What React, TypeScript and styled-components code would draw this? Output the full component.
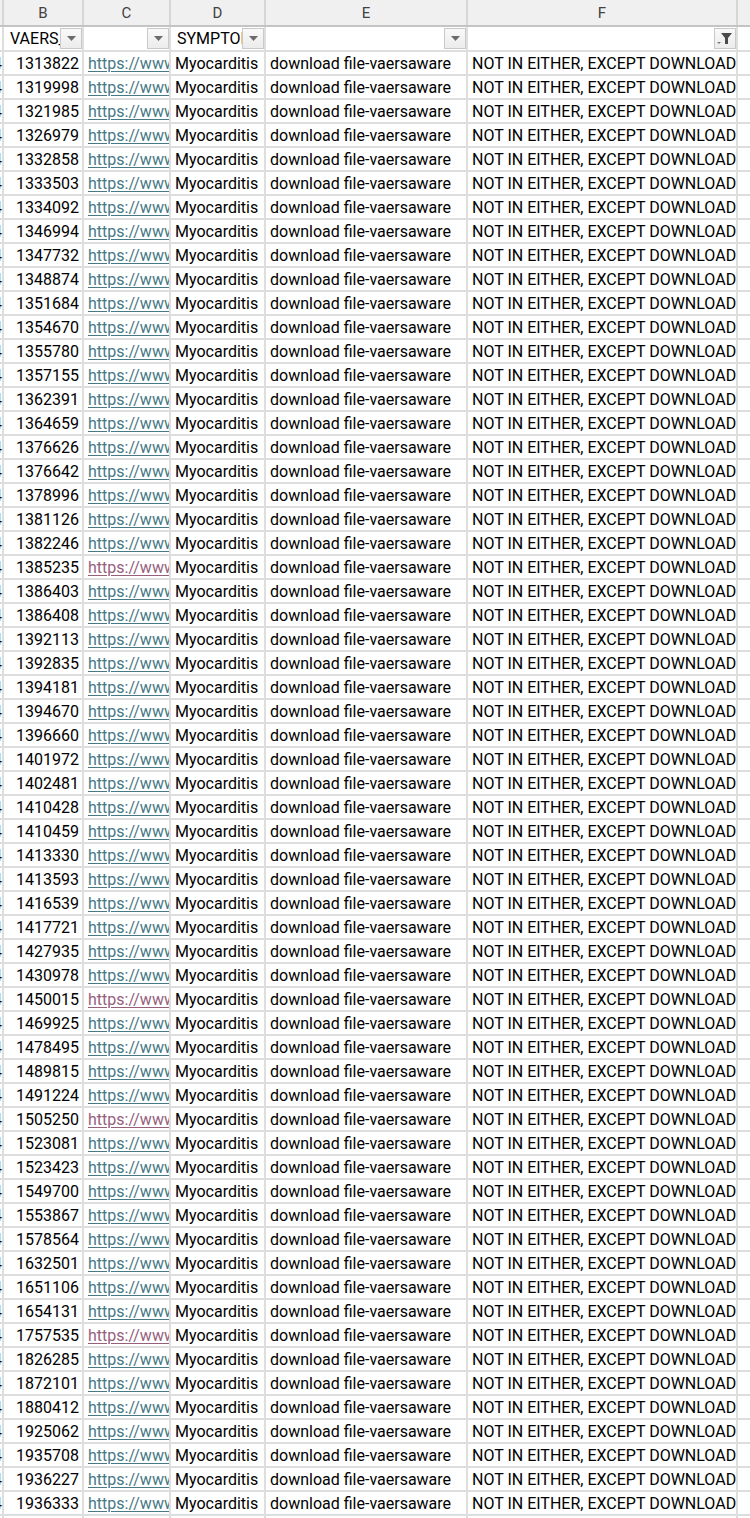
import React from "react";
import styled, {createGlobalStyle} from "styled-components";

const ids = [
    "1313822", "1319998", "1321985", "1326979", "1332858", "1333503", "1334092", "1346994", "1347732", "1348874",
    "1351684", "1354670", "1355780", "1357155", "1362391", "1364659", "1376626", "1376642", "1378996", "1381126",
    "1382246", "1385235", "1386403", "1386408", "1392113", "1392835", "1394181", "1394670", "1396660", "1401972",
    "1402481", "1410428", "1410459", "1413330", "1413593", "1416539", "1417721", "1427935", "1430978", "1450015",
    "1469925", "1478495", "1489815", "1491224", "1505250", "1523081", "1523423", "1549700", "1553867", "1578564",
    "1632501", "1651106", "1654131", "1757535", "1826285", "1872101", "1880412", "1925062", "1935708", "1936227",
    "1936333",
];

// links that were already clicked show purple
const visited = new Set(["1385235", "1450015", "1505250", "1757535"]);

const COLS = "2px 78px 85px 93px 200px 268px 80px";

const GlobalStyle = createGlobalStyle`
    html, body {
        margin: 0;
        padding: 0;
        background: #ffffff;
        overflow: hidden;
    }
    body {
        font-family: Roboto, "Liberation Sans", Arial, sans-serif;
    }
`;

const Sheet = styled.div`
    display: flex;
    flex-direction: column;
    gap: 2px;
    width: 830px;
    background: #dedede;
`;

const LetterRow = styled.div`
    display: grid;
    grid-template-columns: ${COLS};
    column-gap: 2px;
    height: 25px;
    background: #d6d6d6;
    border-bottom: 2px solid #c4c4c4;
    margin-bottom: -2px;
`;

const Letter = styled.div`
    background: #f0f0f0;
    color: #424242;
    font-size: 15px;
    display: flex;
    align-items: center;
    justify-content: center;
`;

const Row = styled.div<{ $tall?: boolean }>`
    display: grid;
    grid-template-columns: ${COLS};
    column-gap: 2px;
    height: ${p => (p.$tall ? 23 : 22)}px;
`;

const Cell = styled.div<{ $align?: "left" | "right" }>`
    background: #ffffff;
    display: flex;
    align-items: center;
    justify-content: ${p => (p.$align === "right" ? "flex-end" : "flex-start")};
    padding: ${p => (p.$align === "right" ? "0 3px 0 0" : "0 0 0 4px")};
    overflow: hidden;
    white-space: nowrap;
    font-size: 16px;
    color: #000000;
`;

const EdgeCell = styled(Cell)`
    padding: 0;
    justify-content: flex-end;
`;

const Link = styled.span<{ $visited?: boolean }>`
    color: ${p => (p.$visited ? "#96607d" : "#467886")};
    text-decoration: underline;
    text-underline-offset: 2px;
`;

const FilterCell = styled.div`
    background: #ffffff;
    display: flex;
    align-items: center;
    overflow: hidden;
    white-space: nowrap;
    font-size: 16px;
    color: #000000;
`;

const FilterLabel = styled.span`
    flex: 1;
    min-width: 0;
    overflow: hidden;
    padding-left: 6px;
`;

const DropButton = styled.div`
    flex: none;
    width: 22px;
    height: 21px;
    box-sizing: border-box;
    border: 1px solid #c9c9c9;
    background: linear-gradient(#f9f9f9, #ececec);
    display: flex;
    align-items: center;
    justify-content: center;
`;

const Arrow = () => (
    <svg width="9" height="5" viewBox="0 0 9 5">
        <path d="M0 0 H9 L4.5 5 Z" fill="#6b6b6b"/>
    </svg>
);

const FunnelIcon = () => (
    <svg width="16" height="14" viewBox="0 0 16 14">
        <path d="M4 1 H15 L11 6 V12 H8 V6 Z" fill="#4a4a4a"/>
        <path d="M0 10 H4 L2 12 Z" fill="#7a7a7a"/>
    </svg>
);

const letters = ["", "B", "C", "D", "E", "F", ""];

const App: React.FC = () => {
    return (
        <>
            <GlobalStyle/>
            <Sheet>
                <LetterRow>
                    {letters.map((l, i) => <Letter key={i}>{l}</Letter>)}
                </LetterRow>
                <Row $tall>
                    <FilterCell/>
                    <FilterCell><FilterLabel>VAERS_ID</FilterLabel><DropButton><Arrow/></DropButton></FilterCell>
                    <FilterCell><FilterLabel/><DropButton><Arrow/></DropButton></FilterCell>
                    <FilterCell><FilterLabel>SYMPTOMS</FilterLabel><DropButton><Arrow/></DropButton></FilterCell>
                    <FilterCell><FilterLabel/><DropButton><Arrow/></DropButton></FilterCell>
                    <FilterCell><FilterLabel/><DropButton><FunnelIcon/></DropButton></FilterCell>
                    <FilterCell/>
                </Row>
                {ids.map(id => (
                    <Row key={id}>
                        <EdgeCell>4</EdgeCell>
                        <Cell $align="right">{id}</Cell>
                        <Cell><Link $visited={visited.has(id)}>https://www.vaersaware.com</Link></Cell>
                        <Cell>Myocarditis</Cell>
                        <Cell>download file-vaersaware</Cell>
                        <Cell>NOT IN EITHER, EXCEPT DOWNLOAD</Cell>
                        <Cell/>
                    </Row>
                ))}
                <Row>
                    <EdgeCell/>
                    <Cell/><Cell/><Cell/><Cell/><Cell/><Cell/>
                </Row>
            </Sheet>
        </>
    );
};

export default App;
